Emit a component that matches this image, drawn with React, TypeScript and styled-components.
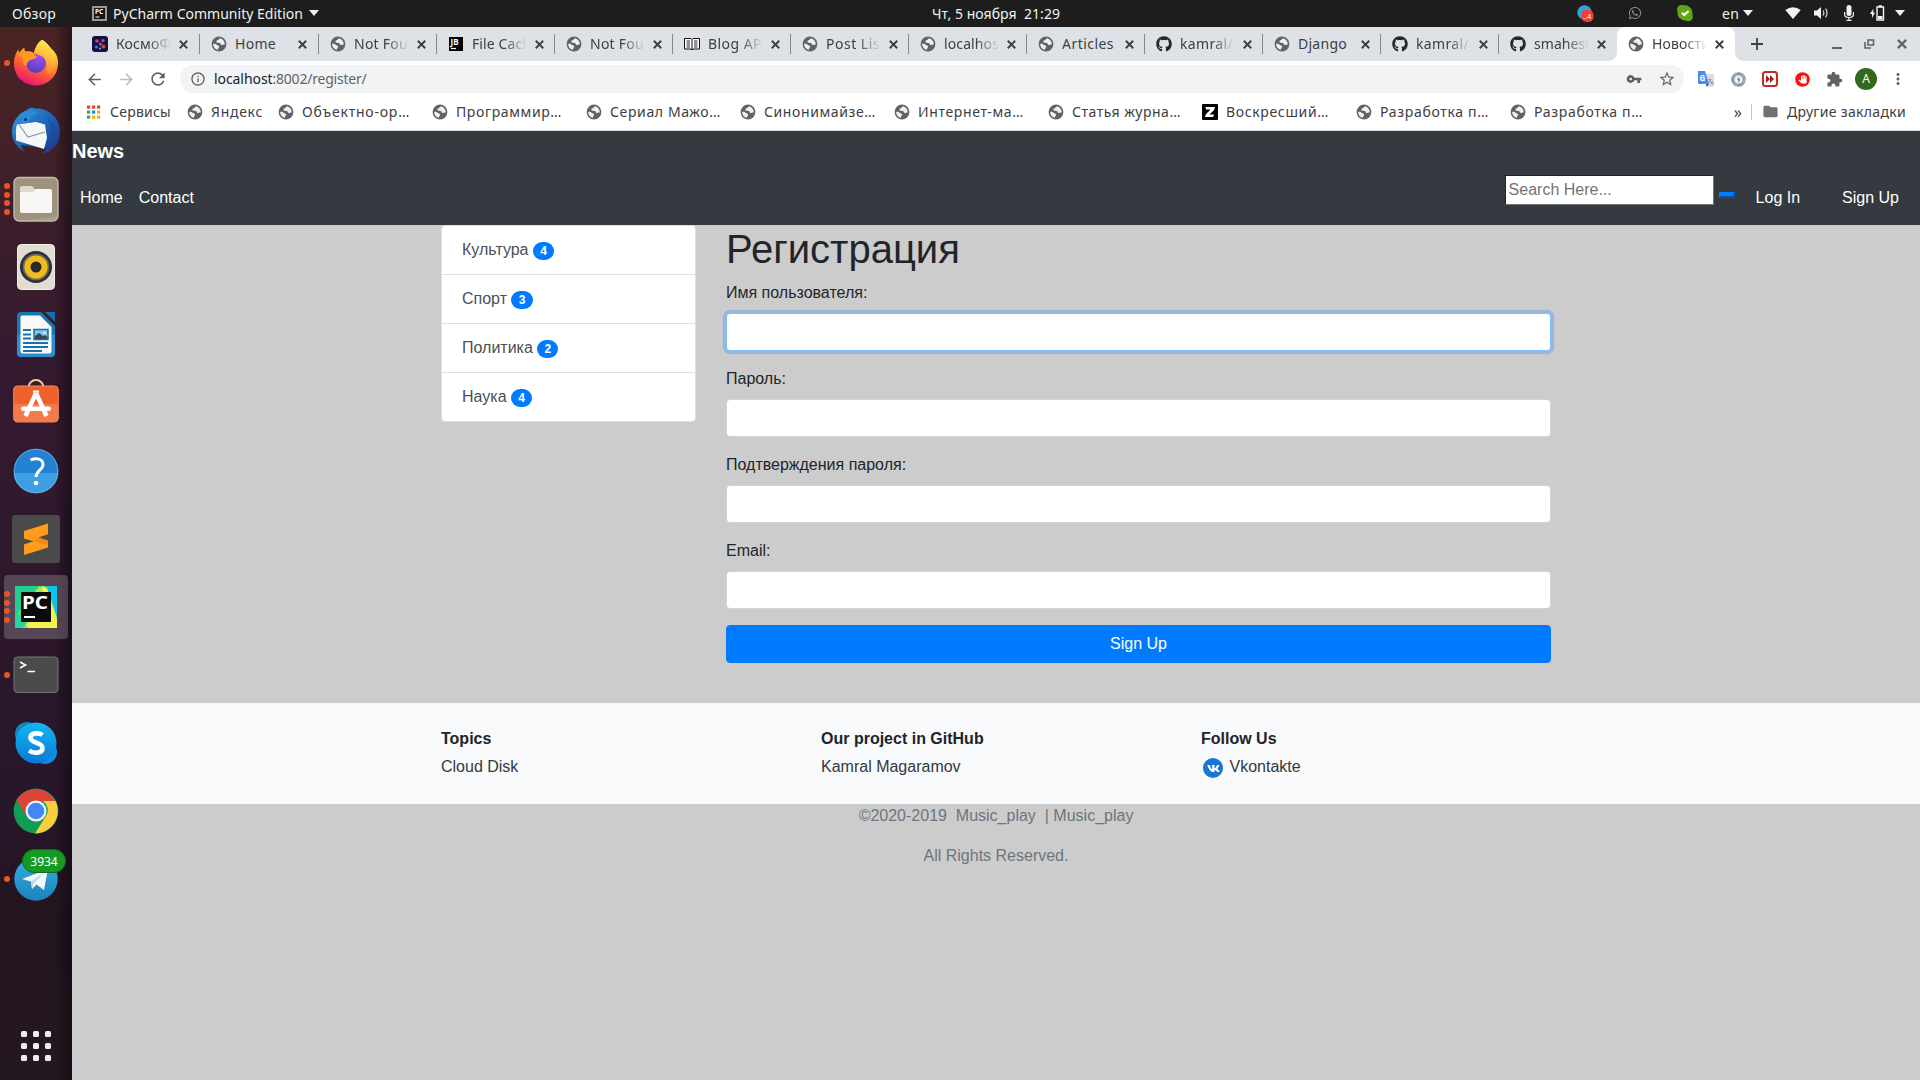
import React, { useLayoutEffect, useRef, useState } from "react";
import styled, { createGlobalStyle, css } from "styled-components";
import { FaGithub, FaVk, FaWhatsapp } from "react-icons/fa";
import {
  MdArrowBack, MdArrowForward, MdRefresh, MdInfoOutline, MdVpnKey, MdStarBorder, MdExtension,
  MdMoreVert, MdFolder, MdTranslate, MdPanTool,
} from "react-icons/md";

const UI = `"Noto Sans", "Open Sans", sans-serif`;
const PAGE = `"Liberation Sans", Arial, sans-serif`;

const Global = createGlobalStyle`
  *, *::before, *::after { box-sizing: border-box; }
  body { margin: 0; background: #ccc; overflow: hidden; }
  svg { display: block; flex: none; }
`;

/* ---------- text with a fixed advance ---------- */

const FitSpan = styled.span`
  display: inline-block;
  white-space: pre;
  flex: none;
`;

function Fit({ w, children }: { w: number; children: string }) {
  const ref = useRef<HTMLSpanElement>(null);
  const [spacing, setSpacing] = useState(0);
  useLayoutEffect(() => {
    if (ref.current) setSpacing((w - ref.current.getBoundingClientRect().width) / children.length);
  }, []);
  return <FitSpan ref={ref} style={{ letterSpacing: spacing }}>{children}</FitSpan>;
}

/* ---------- shell ---------- */

const Desktop = styled.div`
  width: 1920px;
  height: 1080px;
  display: flex;
  flex-direction: column;
  font-family: ${UI};
`;

const TopBar = styled.header`
  height: 27px;
  flex: none;
  display: grid;
  grid-template-columns: 932px auto 1fr;
  align-items: center;
  background: #1d1d1d;
  color: #f0f0f0;
  font-size: 14px;
  line-height: 25px;
  padding-bottom: 1px;
`;

const TopLeft = styled.div`
  display: flex;
  align-items: center;
  padding-left: 12px;
`;

const AppMenu = styled.div`
  display: flex;
  align-items: center;
  gap: 6px;
  margin-left: 36px;
`;

const TopRight = styled.div`
  display: flex;
  align-items: center;
  justify-content: flex-end;
  padding-right: 6px;
`;

const Slot = styled.div<{ $w: number; $gap?: number }>`
  width: ${(p) => p.$w}px;
  margin-left: ${(p) => p.$gap ?? 0}px;
  display: flex;
  align-items: center;
  justify-content: center;
  flex: none;
`;

const Body = styled.div`
  flex: 1;
  min-height: 0;
  display: flex;
`;

/* ---------- dock ---------- */

const Dock = styled.nav`
  width: 72px;
  flex: none;
  display: flex;
  flex-direction: column;
  padding-top: 2px;
  background:
    linear-gradient(90deg, transparent 54px, rgba(10, 5, 12, 0.5) 72px),
    linear-gradient(180deg, #4b2423 0, #3d1f2b 180px, #351a30 330px, #2e182c 560px, #28162a 780px, #23151f 900px, #231720 1053px);
`;

const DockItem = styled.div`
  height: 68px;
  flex: none;
  display: grid;
  grid-template-columns: 4px 64px 4px;
  align-items: center;
`;

const DockFace = styled.div<{ $active?: boolean }>`
  width: 64px;
  height: 64px;
  border-radius: 4px;
  display: flex;
  align-items: center;
  justify-content: center;
  position: relative;
  ${(p) => p.$active && css`background: rgba(255, 255, 255, 0.2);`}
`;

const Dots = styled.div`
  position: absolute;
  left: 0;
  top: 0;
  bottom: 0;
  display: flex;
  flex-direction: column;
  justify-content: center;
  gap: 2.7px;
`;

const Dot = styled.i`
  width: 6px;
  height: 6px;
  border-radius: 50%;
  background: #ea5420;
`;

const Counter = styled.span`
  position: absolute;
  left: 18px;
  top: 2px;
  width: 44px;
  height: 24px;
  border-radius: 12px;
  background: #159a26;
  border: 1px solid #0c6e1a;
  color: #fff;
  font-size: 12px;
  line-height: 23px;
  text-align: center;
`;

const AppGrid = styled.div`
  margin: auto 21px 19px;
  display: grid;
  grid-template-columns: repeat(3, 6px);
  gap: 6px;
`;

const AppGridDot = styled.i`
  height: 6px;
  border-radius: 1.5px;
  background: #f0eff0;
`;

/* ---------- browser ---------- */

const Browser = styled.section`
  flex: 1;
  min-width: 0;
  display: flex;
  flex-direction: column;
  background: #fff;
  color: #3c4043;
  font-size: 14px;
`;

const TabStrip = styled.div`
  height: 34px;
  flex: none;
  display: flex;
  padding-left: 9px;
  background: #dee1e6;
`;

const Tab = styled.div<{ $wide?: boolean; $active?: boolean; $last?: boolean }>`
  width: ${(p) => (p.$wide ? 119 : 118)}px;
  flex: none;
  display: flex;
  align-items: center;
  padding-left: 11px;
  position: relative;
  ${(p) => !p.$active && !p.$last && css`
    &::after {
      content: "";
      width: 1px;
      height: 20px;
      background: #85888d;
      margin-left: auto;
    }
  `}
  ${(p) => p.$active && css`
    background: #fff;
    border-radius: 8px 8px 0 0;
    &::before, &::after {
      content: "";
      position: absolute;
      bottom: 0;
      width: 8px;
      height: 8px;
    }
    &::before { left: -8px; background: radial-gradient(circle at 0 0, transparent 7.5px, #fff 8px); }
    &::after { right: -8px; background: radial-gradient(circle at 100% 0, transparent 7.5px, #fff 8px); }
  `}
`;

const TabTitle = styled.div<{ $fade: boolean }>`
  width: 55px;
  margin-left: 8px;
  overflow: hidden;
  line-height: 22px;
  white-space: nowrap;
  ${(p) => p.$fade && css`mask-image: linear-gradient(90deg, #000 32px, transparent 55px);`}
`;

const TabClose = styled.div`
  margin-left: 8px;
`;

const NewTab = styled.div`
  padding: 11px 0 0 16px;
`;

const WindowButtons = styled.div`
  margin-left: auto;
  display: flex;
  align-items: center;
  gap: 22px;
  padding-right: 13px;
`;

const Toolbar = styled.div`
  height: 36px;
  flex: none;
  display: flex;
  align-items: center;
  padding: 0 6px;
  color: #5f6368;
`;

const Omnibox = styled.div`
  width: 1504px;
  height: 28px;
  margin-left: 6px;
  margin-right: 6px;
  border-radius: 14px;
  background: #f1f3f4;
  display: flex;
  align-items: center;
  padding-left: 10px;
  line-height: 26px;
`;

const Url = styled.div`
  flex: 1;
  padding-left: 8px;
  display: flex;
`;

const Host = styled.span`
  color: #202124;
`;

const Avatar = styled.div`
  width: 22px;
  height: 22px;
  border-radius: 50%;
  background: #33691e;
  color: #fff;
  font-size: 12px;
  line-height: 22px;
  text-align: center;
`;

const Bookmarks = styled.div`
  height: 34px;
  flex: none;
  display: flex;
  align-items: center;
  padding: 0 14px 4px;
  border-bottom: 1px solid #d6d8db;
`;

const Bookmark = styled.div<{ $w: number }>`
  width: ${(p) => p.$w}px;
  flex: none;
  display: flex;
  align-items: center;
  gap: 8px;
  line-height: 22px;
`;

const OtherBookmarks = styled.div`
  margin-left: auto;
  display: flex;
  align-items: center;
  line-height: 22px;
`;

const Chevrons = styled.span`
  font-size: 16px;
  line-height: 20px;
  margin-right: 9px;
`;

const Rule = styled.i`
  width: 1px;
  height: 16px;
  background: #c5c8cc;
  margin-right: 10px;
`;

/* ---------- web page ---------- */

const Page = styled.main`
  flex: 1;
  background: #ccc;
  color: #212529;
  font-family: ${PAGE};
  font-size: 16px;
  line-height: 24px;
`;

const Navbar = styled.div`
  height: 94px;
  background: #343a40;
  color: #fff;
  padding-top: 5px;
`;

const Brand = styled.div`
  font-size: 20px;
  font-weight: 700;
  line-height: 30px;
`;

const NavRow = styled.div`
  display: flex;
  align-items: flex-start;
  padding: 8px 21px 0 8px;
`;

const NavLink = styled.a<{ $gap?: number }>`
  margin-left: ${(p) => p.$gap ?? 0}px;
  padding-top: 12px;
`;

const Search = styled.input`
  width: 209px;
  height: 30px;
  margin: 1px 0 0 auto;
  padding: 1px 3px;
  border: 1px inset #767676;
  background: #fff;
  font: 16px ${PAGE};
  &::placeholder { color: #757575; }
`;

const SearchButton = styled.button`
  width: 16px;
  height: 6px;
  margin: 18px 0 0 5px;
  padding: 0;
  background: #007bff;
  border: 2px outset #007bff;
`;

const Container = styled.div`
  width: 1140px;
  margin: 0 auto;
  padding: 0 15px;
`;

const Content = styled(Container)`
  display: flex;
  gap: 30px;
  height: 478px;
`;

const ListGroup = styled.ul`
  width: 255px;
  margin: 0;
  padding: 0;
  list-style: none;
`;

const ListItem = styled.li`
  padding: 12px 20px;
  height: 50px;
  background: #fff;
  color: #495057;
  border: 1px solid #dfdfdf;
  & + & { margin-top: -1px; }
  &:first-child { border-radius: 4px 4px 0 0; }
  &:last-child { border-radius: 0 0 4px 4px; }
`;

const Badge = styled.span`
  display: inline-block;
  padding: 3px 7.2px;
  border-radius: 10rem;
  background: #007bff;
  color: #fff;
  font-size: 12px;
  font-weight: 700;
  line-height: 1;
`;

const Form = styled.form`
  width: 825px;
`;

const Title = styled.h1`
  margin: 0 0 8px;
  font-size: 40px;
  font-weight: 500;
  line-height: 48px;
`;

const Field = styled.div`
  margin-bottom: 16px;
`;

const Label = styled.label`
  display: block;
  margin-bottom: 8px;
`;

const Input = styled.input<{ $focus?: boolean }>`
  display: block;
  width: 100%;
  height: 38px;
  padding: 6px 12px;
  border: 1px solid ${(p) => (p.$focus ? "#80bdff" : "#ced4da")};
  border-radius: 4px;
  background: #fff;
  box-shadow: ${(p) => (p.$focus ? "0 0 0 3.2px rgba(0, 123, 255, 0.25)" : "none")};
`;

const Submit = styled.button`
  display: block;
  width: 100%;
  height: 38px;
  border: 1px solid #007bff;
  border-radius: 4px;
  background: #007bff;
  color: #fff;
  font: 16px/24px ${PAGE};
`;

const Footer = styled.footer`
  height: 101px;
  background: #f8f9fa;
`;

const FooterRow = styled(Container)`
  display: grid;
  grid-template-columns: repeat(3, 380px);
  padding-top: 24px;
`;

const FooterHead = styled.div`
  font-weight: 700;
  margin-bottom: 4px;
`;

const FooterLink = styled.div`
  display: flex;
  align-items: flex-start;
  color: #343a40;
`;

const VkBadge = styled.div`
  width: 20px;
  height: 20px;
  margin: 3px 6.5px 0 2px;
  border-radius: 50%;
  background: #1976d2;
  color: #fff;
  display: flex;
  align-items: center;
  justify-content: center;
`;

const Copyright = styled.div`
  color: #6c757d;
  text-align: center;
  white-space: pre;
`;

const CopyLine = styled.p`
  margin: 0 0 16px;
`;

/* ---------- small drawings ---------- */

const Globe = () => (
  <svg width="16" height="16" viewBox="0 0 16 16">
    <circle cx="8" cy="8" r="7.4" fill="#5f6368" />
    <path d="M9.3 2.2C7.6 2.6 8 4 6.6 4.3 5.4 4.6 5 5.6 5.8 6.4c.9.8 2.6.1 3.5.9.8.8.2 1.6 1.2 1.8 1.1.2 1.5-.9 3.3-.7.1-2.8-1.7-5.3-4.5-6.2z" fill="#eef0f2" />
    <path d="M2.1 7.900c1.700-.2 3 .3 3.800 1.100.7.700 1.900.4 2.200 1.300.3 1-.8 1.300-.9 2.100-.1.700-.3 1.200-.7 1.400C4 13.100 2.200 10.900 2.100 7.900z" fill="#eef0f2" />
  </svg>
);

const Caret = () => (
  <svg width="10" height="6" viewBox="0 0 11 6" preserveAspectRatio="none"><path d="M0 0h11L5.500 6z" fill="#f0f0f0" /></svg>
);

const Cross = ({ s = 8, c = "#3c4043" }: { s?: number; c?: string }) => (
  <svg width={s} height={s} viewBox="0 0 8 8"><path d="M.7.7l6.600 6.600M7.300.7L.7 7.300" stroke={c} strokeWidth="1.700" /></svg>
);

const MiniPC = () => (
  <svg width="15" height="15" viewBox="0 0 15 15">
    <path d="M0 0h15v15H0z" fill="#9a9a9a" />
    <path d="M2 2h11v11H2z" fill="#151515" />
    <text x="3" y="8.300" fontSize="6.500" fontWeight="700" fill="#fff" fontFamily="Noto Sans">PC</text>
    <path d="M3.500 11h4" stroke="#fff" />
  </svg>
);

const Cosmo = () => (
  <svg width="16" height="16" viewBox="0 0 16 16">
    <rect width="16" height="16" rx="3" fill="#12124a" />
    <circle cx="5" cy="5" r="1.800" fill="#d8405a" /><circle cx="11" cy="4.500" r="1.600" fill="#e24a3c" />
    <circle cx="8.500" cy="8" r="1.600" fill="#b44ac0" /><circle cx="4.500" cy="11" r="1.600" fill="#3d7be0" />
    <circle cx="11.500" cy="10.500" r="2" fill="#d93a3a" /><circle cx="8" cy="12.500" r="1" fill="#e6a0c8" />
  </svg>
);

const JetBrains = () => (
  <svg width="16" height="16" viewBox="0 0 16 16">
    <path d="M1 1h14v14H1z" fill="#000" />
    <text x="2.500" y="8.800" fontSize="8" fontWeight="700" fill="#fff" fontFamily="Noto Sans">JB</text>
    <path d="M3 12.500h5" stroke="#fff" strokeWidth="1.200" />
  </svg>
);

const Book = () => (
  <svg width="16" height="16" viewBox="0 0 16 16" fill="none" stroke="#111">
    <path d="M.5 2.500h6.500l1 1 1-1h6.500v10.500H9l-1 1-1-1H.5zM8 3.500V14" fill="#fff" strokeWidth="1" />
    <path d="M2.500 5h3.500M2.500 7h3.500M2.500 9h3.500M2.500 11h3.500M10 5h3.500M10 7h3.500M10 9h3.500M10 11h3.500" strokeWidth=".9" />
  </svg>
);

const ZMark = () => (
  <svg width="16" height="16" viewBox="0 0 16 16">
    <rect width="16" height="16" rx="1" fill="#000" />
    <path d="M3.500 3h9.500l-1 3-4.500 4.500H12l-.8 2.500H3l1-3L8.500 5.500H4z" fill="#fff" />
  </svg>
);

const Services = () => (
  <svg width="16" height="16" viewBox="0 0 16 16">
    {["#ea4335", "#ea4335", "#ea4335", "#34a853", "#1a84ff", "#fbab00", "#34a853", "#fbab00", "#fbab00"].map((c, i) => (
      <rect key={i} x={1 + (i % 3) * 5} y={1.5 + Math.floor(i / 3) * 5} width="3.200" height="3.200" fill={c} />
    ))}
  </svg>
);

/* ---------- dock drawings ---------- */

const Firefox = () => (
  <svg width="48" height="48" viewBox="0 0 48 48">
    <defs>
      <linearGradient id="ff1" x1=".75" y1="0" x2=".3" y2="1">
        <stop offset="0" stopColor="#fff14a" /><stop offset=".35" stopColor="#ffab26" />
        <stop offset=".65" stopColor="#ff5a36" /><stop offset="1" stopColor="#e5107c" />
      </linearGradient>
      <linearGradient id="ff2" x1=".7" y1="0" x2=".4" y2="1">
        <stop offset="0" stopColor="#fff44f" /><stop offset="1" stopColor="#ff7a2d" />
      </linearGradient>
      <radialGradient id="ff3" cx=".6" cy=".2" r=".9">
        <stop offset="0" stopColor="#a44af5" /><stop offset="1" stopColor="#4b3fb8" />
      </radialGradient>
    </defs>
    <path d="M30 .8c6 3.500 8 8 10.500 10 4.200 3.600 6 9.200 5.500 14.500C45.200 38 35.500 46.500 24 46.500 11.500 46.500 2 37 2 24.500 2 17.500 4 14 6.500 10c0 1.500.2 2.500.7 3.500C9 11.500 11 9 12.500 8.500c-.2 1.800.2 3 1 4 3-.7 6-.2 8.300 1.500C23.500 8 26 3.500 30 .8z" fill="url(#ff1)" />
    <circle cx="24" cy="24" r="10" fill="url(#ff3)" />
    <path d="M30 .8c6 3.500 8 8 10.500 10 3 5 4 12 1.500 18-2 5-6 7.500-8.500 8.200C37 31 36 22 30.500 18c-3-2-6.500-2.500-8.700-4C23.500 8 26 3.500 30 .8z" fill="url(#ff2)" opacity=".85" />
    <path d="M6.500 16c5-3 10-3.500 15-1.500 1 1 2.500 2.700 3.500 3-1.500 2.500-5 2.500-7.500 4-2.500 1.700-3 4-3 5.500-3-1-4.500-4-3.500-8z" fill="#ff9a1f" />
  </svg>
);

const Thunderbird = () => (
  <svg width="48" height="48" viewBox="0 0 48 48">
    <defs><linearGradient id="tb" x1="0" y1="0" x2="1" y2="1">
      <stop offset="0" stopColor="#2f9be0" /><stop offset=".6" stopColor="#1b5cae" /><stop offset="1" stopColor="#2e2a7c" />
    </linearGradient></defs>
    <path d="M15 3c2-2.500 6-2.800 8-1.500C37 1 48 11 48 24.500 48 38 40 45 30 47c3-2 4-4 4-6L9 38c1 3 2 5 4 7C4 40 0 33 0 25 0 15 6 6 15 3z" fill="url(#tb)" />
    <path d="M5 17.500L24 15l9 2.500L35 31l-3 11L4 33.500C4.500 28 3 24 5 17.500z" fill="#f5f6f8" />
    <path d="M7 17.500L16 30l17-5" fill="none" stroke="#8d939b" strokeWidth="1.100" />
    <path d="M9 8c4-5 11-5 17-3-3 2-8 5-9 9-1 2-5 3-8 2-2-2-2-5 0-8z" fill="#2a8bd6" />
    <circle cx="13.500" cy="12.500" r="1.500" fill="#0f2c58" />
    <path d="M33 10c9 8 9 22-1 32 7-3 12-8 13-16-1-8-6-13-12-16z" fill="#174c9c" opacity=".6" />
  </svg>
);

const Files = () => (
  <svg width="46" height="46" viewBox="0 0 46 46">
    <rect x="1" y="1.500" width="44" height="43.500" rx="5" fill="#9d937e" stroke="#c5bfb0" strokeWidth="1.300" />
    <path d="M45 2v38L8 45h32q5 0 5-5z" fill="#b4ac98" opacity=".5" />
    <path d="M7 12q0-2 2-2h10l3 3h14v10H7z" fill="#ddd9ce" />
    <path d="M7 16h13l3-3h14q2 0 2 2v20q0 2-2 2H9q-2 0-2-2z" fill="#f8f7f5" />
  </svg>
);

const Rhythmbox = () => (
  <svg width="38" height="46" viewBox="0 0 38 46">
    <rect x=".5" y=".5" width="37" height="45" rx="4" fill="#e2ddd3" stroke="#f5f2ec" />
    <circle cx="19" cy="23" r="16" fill="#2d2f33" /><circle cx="19" cy="23" r="13.300" fill="#6a6a66" />
    <circle cx="19" cy="23" r="11.600" fill="#f0bd1c" /><circle cx="19" cy="23" r="5.500" fill="#26282b" />
  </svg>
);

const Writer = () => (
  <svg width="38" height="46" viewBox="0 0 38 46">
    <path d="M4 0h20l14 14v27q0 4-4 4H4q-4 0-4-4V4q0-4 4-4z" fill="#1878b0" />
    <path d="M0 23h38v18q0 4-4 4H4q-4 0-4-4z" fill="#2a90cc" />
    <path d="M5 3.500h18L34.500 15v24q0 2.500-2.500 2.500H6q-2.500 0-2.500-2.500V5q0-1.500 1.500-1.500z" fill="#f7f9fa" />
    <path d="M28 0h10v10z" fill="#1a6fa8" />
    <path d="M6 18h8M6 22.500h8M6 26.500h8M6 31h25M6 35h25M6 39h19" stroke="#1872ad" strokeWidth="2" />
    <path d="M17 17.500h14v10H17z" fill="#7cc6f0" stroke="#1872ad" strokeWidth="1.500" />
    <path d="M18 27v-3l4-3 4 3 2-1 2.500 2v2z" fill="#39474e" /><circle cx="27.500" cy="20.500" r="1.500" fill="#f9e27b" />
  </svg>
);

const Software = () => (
  <svg width="46" height="48" viewBox="0 0 46 48">
    <path d="M15.500 12V8.500a7.500 7.500 0 0 1 15 0V12" fill="none" stroke="#f2cb9b" strokeWidth="2" />
    <rect x=".7" y="7" width="44.600" height="36" rx="4" fill="#f0602d" stroke="#f58a62" />
    <path d="M1 25h44v14q0 4-4 4H5q-4 0-4-4z" fill="#f57a49" />
    <path d="M23 14L12.500 37M23 14l10.500 23" stroke="#fff" strokeWidth="4.500" />
    <path d="M20 12.500h6" stroke="#fff" strokeWidth="2" />
    <rect x="8" y="27.500" width="30" height="4.600" rx="2.300" fill="#fff" />
  </svg>
);

const Help = () => (
  <svg width="46" height="46" viewBox="0 0 46 46">
    <circle cx="23" cy="23" r="22.300" fill="#2381d2" />
    <path d="M.7 25a22.300 20.300 0 0 0 44.600 0z" fill="#3f9de2" />
    <circle cx="23" cy="23" r="21.800" fill="none" stroke="#6cb5e8" strokeWidth=".8" />
    <path d="M17.500 12c5.500-2.500 12.500-1.500 12.500 4.500 0 5.500-7 6-7 12.500" fill="none" stroke="#fff" strokeWidth="2.900" />
    <circle cx="23" cy="35" r="2.300" fill="#fff" />
  </svg>
);

const Sublime = () => (
  <svg width="48" height="48" viewBox="0 0 48 48">
    <rect width="48" height="48" rx="3" fill="#4a4a4a" />
    <path d="M36 8.500v10.800l-9.500 3.200L36 25.500v7L12 40V29.500l9.500-3.200L12 23.500V16z" fill="#ff9c1c" />
    <path d="M22 26.300l4.500-3.800L36 25.500v3.500l-2 1z" fill="#e8841a" opacity=".7" />
  </svg>
);

const PyCharm = () => (
  <svg width="42" height="42" viewBox="0 0 42 42">
    <path d="M0 0h42v42H0z" fill="#21d08f" />
    <path d="M0 30L24 0h4L14 42H0z" fill="#3fdc84" />
    <path d="M32 0h10v35z" fill="#0bc5ea" /><path d="M22 5l6-5 4 2 10 30v10H7l15-14z" fill="#f4f04e" />
    <path d="M0 24L13 42H0z" fill="#12c7c1" opacity=".5" /><path d="M25 0l-9 10h14z" fill="#a8e85c" />
    <path d="M6 6h30v30H6z" fill="#0c0c0c" />
    <text x="7" y="22.500" fontSize="18" fontWeight="700" fill="#fff" fontFamily="Noto Sans" textLength="26" lengthAdjust="spacingAndGlyphs">PC</text>
    <path d="M9 31h11" stroke="#fff" strokeWidth="2" />
  </svg>
);

const Terminal = () => (
  <svg width="46" height="38" viewBox="0 0 46 38">
    <rect x="1" y="1" width="44" height="35.500" rx="3.500" fill="#4b4b4b" stroke="#777" />
    <path d="M7 6l5.500 3L7 12M14.500 15.500H22" fill="none" stroke="#fff" strokeWidth="1.600" />
  </svg>
);

const Skype = () => (
  <svg width="44" height="44" viewBox="0 0 44 44">
    <defs><linearGradient id="sk" x1="0" y1="0" x2="0" y2="1">
      <stop offset="0" stopColor="#12b7f1" /><stop offset="1" stopColor="#0a78d8" />
    </linearGradient></defs>
    <circle cx="13" cy="13" r="12" fill="#1583bd" /><circle cx="31" cy="31" r="12" fill="#0f8de6" />
    <circle cx="22" cy="22" r="20.500" fill="url(#sk)" />
    <path d="M28.500 14c-3-2.200-12-3-12 2.800 0 6 12 4 12 10.200 0 6-9.500 5.500-13.500 2.700" fill="none" stroke="#fff" strokeWidth="4.600" />
  </svg>
);

const Chrome = () => (
  <svg width="46" height="46" viewBox="0 0 46 46">
    <circle cx="23" cy="23" r="22.400" fill="#109d58" />
    <path d="M3.600 11.800A22.400 22.400 0 0 1 42.400 13H23A11 11 0 0 0 13 28z" fill="#dc4438" />
    <path d="M42.400 13A22.400 22.400 0 0 1 22 45.400L33 28a11 11 0 0 0-3-15z" fill="#fdcd40" />
    <circle cx="23" cy="23" r="10.500" fill="#f3f3f3" /><circle cx="23" cy="23" r="8.300" fill="#4486f5" />
  </svg>
);

const Telegram = () => (
  <svg width="44" height="44" viewBox="0 0 44 44">
    <defs><linearGradient id="tg" x1="0" y1="0" x2="0" y2="1">
      <stop offset="0" stopColor="#36aee2" /><stop offset="1" stopColor="#1c82bd" />
    </linearGradient></defs>
    <circle cx="22" cy="22" r="21.700" fill="url(#tg)" />
    <path d="M8 22L34 12l-4 21-7.500-5.500L18 32l-1-7.500z" fill="#f4f8fb" /><path d="M17 24.500L31 15 19.500 26.500 18 32z" fill="#c3d4e4" />
  </svg>
);

/* ---------- data ---------- */

const dockApps: { icon: React.ReactNode; dots?: number; active?: boolean; count?: string }[] = [
  { icon: <Firefox />, dots: 1 },
  { icon: <Thunderbird /> },
  { icon: <Files />, dots: 4 },
  { icon: <Rhythmbox /> },
  { icon: <Writer /> },
  { icon: <Software /> },
  { icon: <Help /> },
  { icon: <Sublime /> },
  { icon: <PyCharm />, dots: 4, active: true },
  { icon: <Terminal />, dots: 1 },
  { icon: <Skype /> },
  { icon: <Chrome /> },
  { icon: <Telegram />, dots: 1, count: "3934" },
];

const GitHub = () => <FaGithub size={16} color="#24292e" />;

const tabs: [React.ReactNode, string, number, boolean][] = [
  [<Cosmo />, "КосмоФ", 55, true],
  [<Globe />, "Home", 41, false],
  [<Globe />, "Not Fou", 54, true],
  [<JetBrains />, "File Cach", 59, true],
  [<Globe />, "Not Fou", 54, true],
  [<Book />, "Blog AP", 54, true],
  [<Globe />, "Post Lis", 54, true],
  [<Globe />, "localhos", 55, true],
  [<Globe />, "Articles", 52, false],
  [<GitHub />, "kamral/", 53, true],
  [<Globe />, "Django", 49, false],
  [<GitHub />, "kamral/", 53, true],
  [<GitHub />, "smahesh", 60, true],
  [<Globe />, "Новости", 58, true],
];

const bookmarks: [React.ReactNode, string, number, number][] = [
  [<Services />, "Сервисы", 61, 101],
  [<Globe />, "Яндекс", 52, 91],
  [<Globe />, "Объектно-ор…", 108, 154],
  [<Globe />, "Программир…", 106, 154],
  [<Globe />, "Сериал Мажо…", 111, 154],
  [<Globe />, "Синонимайзе…", 112, 154],
  [<Globe />, "Интернет-ма…", 106, 154],
  [<Globe />, "Статья журна…", 109, 154],
  [<ZMark />, "Воскресший…", 103, 154],
  [<Globe />, "Разработка п…", 109, 154],
  [<Globe />, "Разработка п…", 109, 154],
];

const categories: [string, number][] = [["Культура", 4], ["Спорт", 3], ["Политика", 2], ["Наука", 4]];
const fields = ["Имя пользователя:", "Пароль:", "Подтверждения пароля:", "Email:"];

/* ---------- app ---------- */

export default function App() {
  return (
    <Desktop>
      <Global />
      <TopBar>
        <TopLeft>
          <Fit w={44}>Обзор</Fit>
          <AppMenu>
            <MiniPC />
            <Fit w={190}>PyCharm Community Edition</Fit>
            <Caret />
          </AppMenu>
        </TopLeft>
        <Fit w={128}>Чт, 5 ноября  21:29</Fit>
        <TopRight>
          <Slot $w={50}>
            <svg width="17" height="17" viewBox="0 0 17 17">
              <circle cx="7.500" cy="7.500" r="7.200" fill="#2fa5dc" />
              <rect x="4.500" y="5" width="12" height="12" rx="5" fill="#f23c34" />
              <text x="6" y="14" fontSize="7.500" fill="#fff" fontFamily="Noto Sans">..4</text>
            </svg>
          </Slot>
          <Slot $w={50}><FaWhatsapp size={14} color="#8c8c8c" /></Slot>
          <Slot $w={50}>
            <svg width="16" height="16" viewBox="0 0 16 16">
              <path d="M4 0q4 0 6 .5Q16 3 15.500 10q1 3-1 5t-5 .7Q0 15 .5 7-1 1 4 0z" fill="#62a614" />
              <path d="M5 7.800l2.200 2.200L11.500 6" fill="none" stroke="#fff" strokeWidth="2" />
            </svg>
          </Slot>
          <Slot $w={55}><Fit w={21}>en </Fit><Caret /></Slot>
          <Slot $w={45} $gap={5}>
            <svg width="16" height="12" viewBox="0 0 16 12"><path d="M.3 3Q8-2.300 15.700 3L8 12z" fill="#f2f2f2" /></svg>
          </Slot>
          <Slot $w={13}>
            <svg width="15" height="14" viewBox="0 0 15 14">
              <path d="M0 4.500h3L7 1v12L3 9.500H0z" fill="#f2f2f2" />
              <path d="M9 4.500q1.700 2.500 0 5M11.500 2.500q3 4.500 0 9" fill="none" stroke="#d0d0d0" strokeWidth="1.300" />
            </svg>
          </Slot>
          <Slot $w={42}>
            <svg width="10" height="16" viewBox="0 0 10 16">
              <rect x="2.500" y="0" width="5" height="11" rx="2.500" fill="#f2f2f2" />
              <path d="M.6 7v2.500q0 3 4.400 3t4.400-3V7M5 12.500V15M2.500 15.300h5" fill="none" stroke="#f2f2f2" strokeWidth="1.200" />
            </svg>
          </Slot>
          <Slot $w={15}>
            <svg width="15" height="16" viewBox="0 0 15 16">
              <path d="M3.500 3.500L0 9h2v4l3-5.500H3z" fill="#f2f2f2" />
              <path d="M7 2h6.500v13H7zM8.500 1h3.500" fill="none" stroke="#f2f2f2" strokeWidth="1.400" />
              <path d="M8 11h4.500v3H8z" fill="#f2f2f2" />
            </svg>
          </Slot>
          <Slot $w={29}><Caret /></Slot>
        </TopRight>
      </TopBar>

      <Body>
        <Dock>
          {dockApps.map((a, i) => (
            <DockItem key={i}>
              <span />
              <DockFace $active={a.active}>
                {a.dots && <Dots>{Array.from({ length: a.dots }, (_, d) => <Dot key={d} />)}</Dots>}
                {a.icon}
                {a.count && <Counter>{a.count}</Counter>}
              </DockFace>
            </DockItem>
          ))}
          <AppGrid>{Array.from({ length: 9 }, (_, i) => <AppGridDot key={i} />)}</AppGrid>
        </Dock>

        <Browser>
          <TabStrip>
            {tabs.map(([icon, title, w, fade], i) => (
              <Tab key={i} $wide={i < 2} $active={i === tabs.length - 1} $last={i === tabs.length - 2}>
                {icon}
                <TabTitle $fade={fade}><Fit w={w}>{title}</Fit></TabTitle>
                <TabClose><Cross s={9} /></TabClose>
              </Tab>
            ))}
            <NewTab>
              <svg width="12" height="12" viewBox="0 0 12 12"><path d="M0 6h12M6 0v12" stroke="#3c4043" strokeWidth="1.800" /></svg>
            </NewTab>
            <WindowButtons>
              <svg width="10" height="10" viewBox="0 0 10 10"><path d="M0 9h10" stroke="#5f6368" strokeWidth="2" /></svg>
              <svg width="11" height="10" viewBox="0 0 11 10"><path d="M4 1h5.500v5H4zM1 3v6h6" fill="none" stroke="#5f6368" strokeWidth="1.600" /></svg>
              <Cross s={10} c="#5f6368" />
            </WindowButtons>
          </TabStrip>

          <Toolbar>
            <Slot $w={32}><MdArrowBack size={19} /></Slot>
            <Slot $w={32}><MdArrowForward size={19} color="#babcbe" /></Slot>
            <Slot $w={32}><MdRefresh size={20} /></Slot>
            <Omnibox>
              <MdInfoOutline size={16} />
              <Url><Host><Fit w={58.5}>localhost</Fit></Host><Fit w={94}>:8002/register/</Fit></Url>
              <Slot $w={32}><MdVpnKey size={16} /></Slot>
              <Slot $w={34}><MdStarBorder size={18} /></Slot>
            </Omnibox>
            <Slot $w={32}>
              <svg width="16" height="16" viewBox="0 0 16 16">
                <path d="M6 3h10v13H9z" fill="#dcdcdc" /><path d="M0 0h7l4 13H1q-1 0-1-1z" fill="#4a8af4" />
                <path d="M8 13h3l-2.500 3z" fill="#2a4fb8" />
                <text x="1.500" y="9.500" fontSize="8" fontWeight="700" fill="#fff" fontFamily="Noto Sans">G</text>
                <MdTranslate x={9} y={7} size={7} color="#6f8490" />
              </svg>
            </Slot>
            <Slot $w={32}>
              <svg width="15" height="15" viewBox="0 0 15 15">
                <circle cx="7.500" cy="7.500" r="5.800" fill="#eef2f4" stroke="#7e95a0" strokeWidth="3" />
                <circle cx="7.500" cy="7.500" r="6" fill="none" stroke="#b6c4cb" strokeWidth="1" strokeDasharray="6 4" />
                <path d="M8.500 4.500L6 8h1.500L7 11l2.500-3.500H8z" fill="#546e7a" />
              </svg>
            </Slot>
            <Slot $w={32}>
              <svg width="16" height="16" viewBox="0 0 16 16">
                <rect x="1" y="1" width="14" height="14" rx="2.500" fill="#fff" stroke="#c02a2a" strokeWidth="2" />
                <path d="M4 4l4 4-4 4zM8 4l4 4-4 4z" fill="#a81c1c" />
              </svg>
            </Slot>
            <Slot $w={32}>
              <svg width="15" height="15" viewBox="0 0 15 15">
                <circle cx="7.500" cy="7.500" r="7.300" fill="#f91111" />
                <MdPanTool x={3} y={2.8} size={9} color="#fff" />
              </svg>
            </Slot>
            <Slot $w={32}><MdExtension size={17} /></Slot>
            <Slot $w={32}><Avatar>A</Avatar></Slot>
            <Slot $w={32}><MdMoreVert size={18} /></Slot>
          </Toolbar>

          <Bookmarks>
            {bookmarks.map(([icon, title, w, width], i) => (
              <Bookmark key={i} $w={width}>{icon}<Fit w={w}>{title}</Fit></Bookmark>
            ))}
            <OtherBookmarks>
              <Chevrons>»</Chevrons>
              <Rule />
              <MdFolder size={17} color="#6e7276" />
              <Bookmark $w={127}><span /><Fit w={119}>Другие закладки</Fit></Bookmark>
            </OtherBookmarks>
          </Bookmarks>

          <Page>
            <Navbar>
              <Brand>News</Brand>
              <NavRow>
                <NavLink>Home</NavLink>
                <NavLink $gap={16}>Contact</NavLink>
                <Search placeholder="Search Here..." />
                <SearchButton />
                <NavLink $gap={21}>Log In</NavLink>
                <NavLink $gap={42}>Sign Up</NavLink>
              </NavRow>
            </Navbar>

            <Content>
              <ListGroup>
                {categories.map(([name, n]) => (
                  <ListItem key={name}>{name} <Badge>{n}</Badge></ListItem>
                ))}
              </ListGroup>
              <Form>
                <Title>Регистрация</Title>
                {fields.map((f, i) => (
                  <Field key={f}>
                    <Label>{f}</Label>
                    <Input $focus={i === 0} />
                  </Field>
                ))}
                <Submit type="button">Sign Up</Submit>
              </Form>
            </Content>

            <Footer>
              <FooterRow>
                <div><FooterHead>Topics</FooterHead><FooterLink>Cloud Disk</FooterLink></div>
                <div><FooterHead>Our project in GitHub</FooterHead><FooterLink>Kamral Magaramov</FooterLink></div>
                <div>
                  <FooterHead>Follow Us</FooterHead>
                  <FooterLink><VkBadge><FaVk size={13} /></VkBadge>Vkontakte</FooterLink>
                </div>
              </FooterRow>
            </Footer>

            <Copyright>
              <CopyLine>©2020-2019  Music_play  | Music_play</CopyLine>
              <CopyLine>All Rights Reserved.</CopyLine>
            </Copyright>
          </Page>
        </Browser>
      </Body>
    </Desktop>
  );
}
